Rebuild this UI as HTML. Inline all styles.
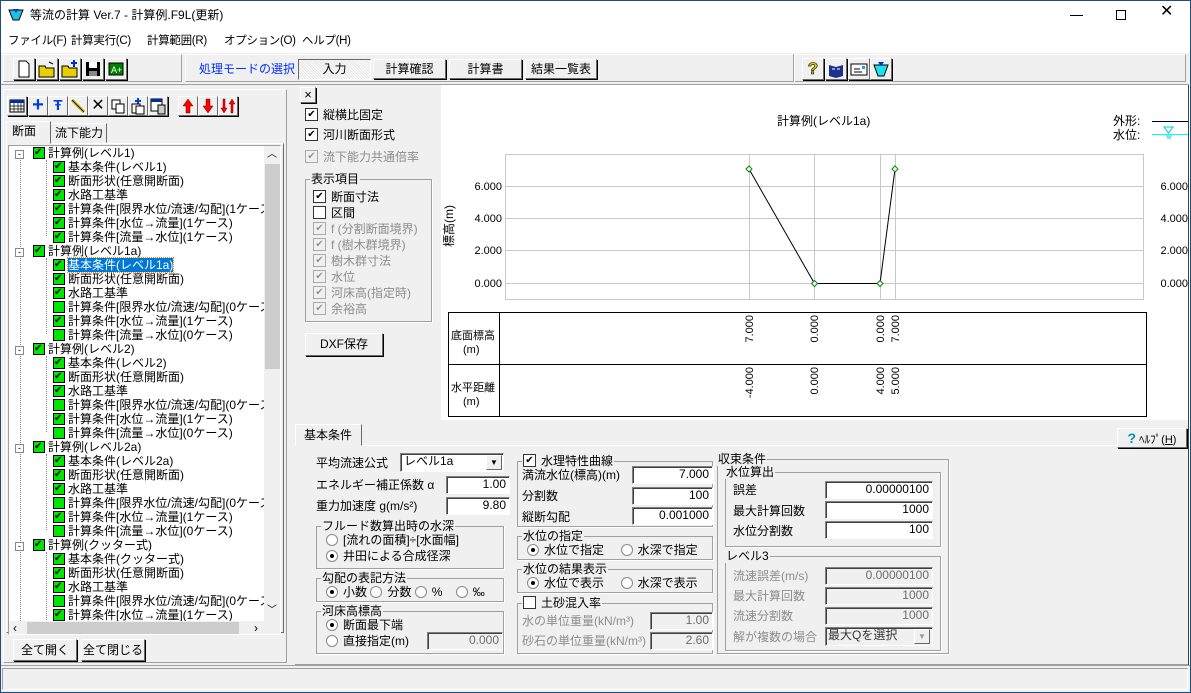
<!DOCTYPE html>
<html><head><meta charset="utf-8">
<style>
*{box-sizing:border-box;margin:0;padding:0}
body{width:1191px;height:693px;position:relative;overflow:hidden;background:#f0f0f0;font-family:"Liberation Sans","Noto Sans CJK JP",sans-serif;font-size:12px;color:#000}
.a{position:absolute;white-space:nowrap;line-height:14px}
.m{font-size:11.5px;letter-spacing:-0.3px}
.btn{position:absolute;background:#f0f0f0;border:1px solid;border-color:#fff #696969 #696969 #fff;box-shadow:1px 1px 0 #000;text-align:center}
.inp{position:absolute;background:#fff;border:1px solid;border-color:#808080 #fff #fff #808080;box-shadow:inset 1px 1px 0 #404040;text-align:right;padding-right:3px;line-height:15px;font-size:12px}
.inp.d{color:#6d6d6d;background:#f0f0f0}
.grp{position:absolute;border:1px solid #a0a0a0;box-shadow:1px 1px 0 #fff}
.grp>.lg{position:absolute;top:-8px;left:4px;background:#f0f0f0;padding:0 1px;line-height:14px}
.cb{display:inline-block;width:13px;height:13px;border:1px solid #333;background:#fff;vertical-align:-2px;margin-right:5px;position:relative;font-size:11px;line-height:11px;text-align:center}
.cb.k::after{content:"✔";position:absolute;left:0;top:0;width:11px;font-size:10px}
.cb.dis{border-color:#aaa;background:#f0f0f0;color:#999}
.rb{display:inline-block;width:12px;height:12px;border-radius:50%;border:1px solid #888;background:#fff;vertical-align:-2px;margin-right:5px;position:relative}
.rb.k::after{content:"";position:absolute;left:3px;top:3px;width:4px;height:4px;border-radius:50%;background:#000}
.dis{color:#8d8d8d}
.tr{position:absolute;height:14px;line-height:14px;white-space:nowrap}
.g{display:inline-block;width:12px;height:12px;background:#00e600;border:1px solid #000;vertical-align:-2px;margin-right:3px;position:relative}
.g.k::after{content:"✔";position:absolute;left:0;top:-1px;font-size:10px;line-height:12px}
.tbi{position:absolute;top:61px;width:22px;height:22px;border:1px solid;border-color:#fff #696969 #696969 #fff;box-shadow:1px 1px 0 #000}
.lti{position:absolute;top:96px;width:20px;height:20px;border:1px solid;border-color:#fff #696969 #696969 #fff;box-shadow:1px 1px 0 #000}
.pm{display:inline-block;width:9px;height:9px;border:1px solid #888;background:#fff;font-size:9px;line-height:6px;text-align:center;margin-right:9px;vertical-align:0}
</style></head><body>
<div style="position:absolute;left:0;top:0;width:1191px;height:52px;background:#fff"></div>
<svg style="position:absolute;left:8px;top:8px" width="16" height="14"><path d="M1 2h14l-4 10h-6z" fill="#20c0e0" stroke="#000" stroke-width="1"/><path d="M5 1h6l-3 4z" fill="#0040c0"/></svg>
<div class="a" style="left:30px;top:8px;font-size:12px">等流の計算 Ver.7 - 計算例.F9L(更新)</div>
<div style="position:absolute;left:1070px;top:15px;width:13px;height:1px;background:#000"></div>
<div style="position:absolute;left:1116px;top:10px;width:10px;height:10px;border:1px solid #000"></div>
<div class="a" style="left:1160px;top:5px;font-size:16px">✕</div>
<div class="a m" style="left:8px;top:34px">ファイル(F)</div>
<div class="a m" style="left:71px;top:34px">計算実行(C)</div>
<div class="a m" style="left:147px;top:34px">計算範囲(R)</div>
<div class="a m" style="left:224px;top:34px">オプション(O)</div>
<div class="a m" style="left:302px;top:34px">ヘルプ(H)</div>
<div style="position:absolute;left:0;top:52px;width:1189px;height:33px;border-top:1px solid #fff;border-bottom:1px solid #a0a0a0"></div>
<div style="position:absolute;left:3px;top:54px;width:179px;height:28px;border:1px solid;border-color:#fff #a0a0a0 #a0a0a0 #fff"></div>
<div style="position:absolute;left:185px;top:54px;width:1001px;height:28px;border:1px solid;border-color:#fff #a0a0a0 #a0a0a0 #fff"></div>
<div class="tbi" style="left:13px;top:58px"><svg width="20" height="20"><path d="M5 2h7l3 3v13H5z" fill="#fff" stroke="#000"/></svg></div>
<div class="tbi" style="left:36px;top:58px"><svg width="20" height="20"><path d="M2 7h6l1 2h8v9H2z" fill="#e8d000" stroke="#000"/><path d="M12 3l4 2" stroke="#000"/></svg></div>
<div class="tbi" style="left:59px;top:58px"><svg width="20" height="20"><path d="M2 7h6l1 2h8v9H2z" fill="#e8d000" stroke="#000"/><path d="M14 1v7M11 4h6" stroke="#0030c0" stroke-width="2"/></svg></div>
<div class="tbi" style="left:82px;top:58px"><svg width="20" height="20"><rect x="3" y="3" width="14" height="14" fill="#000"/><rect x="6" y="3" width="8" height="6" fill="#fff"/><rect x="6" y="12" width="8" height="5" fill="#888"/></svg></div>
<div class="tbi" style="left:105px;top:58px"><svg width="20" height="20"><rect x="3" y="4" width="14" height="12" fill="#008000" stroke="#000"/><text x="5" y="14" font-size="9" fill="#fff">A+</text></svg></div>
<div class="a" style="left:199px;top:62px;color:#0030ff">処理モードの選択</div>
<div style="position:absolute;left:298px;top:59px;width:73px;height:21px;border:1px solid;border-color:#696969 #fff #fff #696969;background:repeating-linear-gradient(45deg,#e8e8e8 0 1px,#fafafa 1px 2px);text-align:center;line-height:19px">入力</div>
<div class="btn" style="left:373px;top:59px;width:73px;height:20px;line-height:18px">計算確認</div>
<div class="btn" style="left:449px;top:59px;width:73px;height:20px;line-height:18px">計算書</div>
<div class="btn" style="left:525px;top:59px;width:72px;height:20px;line-height:18px">結果一覧表</div>
<div style="position:absolute;left:793px;top:54px;width:2px;height:28px;border-left:1px solid #a0a0a0;border-right:1px solid #fff"></div>
<div class="tbi" style="left:802px;top:58px;text-align:center;font-weight:bold;color:#e0d000;font-size:17px;line-height:19px;-webkit-text-stroke:0.6px #000">?</div>
<div class="tbi" style="left:825px;top:58px"><svg width="20" height="20"><path d="M3 6l7 2 7-2v11l-7 2-7-2z" fill="#203090"/><path d="M6 10h3M11 10h3" stroke="#fff"/></svg></div>
<div class="tbi" style="left:848px;top:58px"><svg width="20" height="20"><rect x="2" y="5" width="16" height="11" fill="#fff" stroke="#000"/><path d="M5 10h6M5 13h8" stroke="#000"/><rect x="13" y="7" width="3" height="3" fill="#20a0e0"/></svg></div>
<div class="tbi" style="left:870px;top:58px"><svg width="20" height="20"><path d="M3 6h14l-4 11H7z" fill="#20e0f0" stroke="#000"/><path d="M7 3h6l-3 4z" fill="#0030c0"/></svg></div>
<div style="position:absolute;left:3px;top:89px;width:284px;height:574px;border:1px solid;border-color:#fff #a0a0a0 #a0a0a0 #fff"></div>
<div class="lti" style="left:7px"><svg width="18" height="18"><rect x="2" y="3" width="14" height="12" fill="#fff" stroke="#000"/><rect x="2" y="3" width="14" height="3" fill="#0030a0"/><path d="M2 9h14M2 12h14M6 6v9M10 6v9M13 6v9" stroke="#000" stroke-width=".7"/></svg></div>
<div class="lti" style="left:28px;color:#0040e0;font-size:20px;font-weight:bold;text-align:center;line-height:17px">+</div>
<div class="lti" style="left:48px;color:#0040e0;font-size:15px;font-weight:bold;text-align:center;line-height:17px">Ŧ</div>
<div class="lti" style="left:68px"><svg width="18" height="18"><path d="M3 3l12 12" stroke="#c0a000" stroke-width="3"/><path d="M3 3l12 12" stroke="#000" stroke-width=".6"/></svg></div>
<div class="lti" style="left:88px;font-size:16px;text-align:center;line-height:17px">✕</div>
<div class="lti" style="left:108px"><svg width="18" height="18"><rect x="3" y="3" width="8" height="9" fill="#fff" stroke="#000"/><rect x="7" y="7" width="8" height="9" fill="#fff" stroke="#000"/></svg></div>
<div class="lti" style="left:128px"><svg width="18" height="18"><path d="M9 1v7M6 4h6" stroke="#0040e0" stroke-width="2"/><rect x="3" y="7" width="8" height="9" fill="#fff" stroke="#000"/><rect x="7" y="9" width="8" height="8" fill="#fff" stroke="#000"/></svg></div>
<div class="lti" style="left:148px"><svg width="18" height="18"><rect x="2" y="2" width="11" height="12" fill="#fff" stroke="#000"/><rect x="2" y="2" width="11" height="3" fill="#0030a0"/><rect x="9" y="8" width="7" height="9" fill="#ccc" stroke="#000"/></svg></div>
<div class="lti" style="left:178px"><svg width="18" height="18"><path d="M9 2l5 7h-3v7H7V9H4z" fill="#f00" stroke="#600" stroke-width=".5"/></svg></div>
<div class="lti" style="left:198px"><svg width="18" height="18"><path d="M9 16l5-7h-3V2H7v7H4z" fill="#f00" stroke="#600" stroke-width=".5"/></svg></div>
<div class="lti" style="left:218px"><svg width="18" height="18"><path d="M5 16l3-5H6V2H4v9H2zM13 2l3 5h-2v9h-2V7h-2z" fill="#f00" stroke="#600" stroke-width=".5"/></svg></div>
<div style="position:absolute;left:6px;top:121px;width:45px;height:23px;border:1px solid;border-color:#fff #696969 #f0f0f0 #fff;background:#f0f0f0;z-index:2"></div>
<div class="a" style="left:12px;top:124px;z-index:3">断面</div>
<div style="position:absolute;left:50px;top:123px;width:57px;height:20px;border:1px solid;border-color:#fff #696969 #f0f0f0 #fff"></div>
<div class="a" style="left:55px;top:126px">流下能力</div>
<div style="position:absolute;left:6px;top:143px;width:278px;height:490px;border:1px solid;border-color:#fff #696969 #696969 #fff"></div>
<div style="position:absolute;left:8px;top:145px;width:273px;height:490px;border:1px solid;border-color:#a0a0a0 #fff #fff #a0a0a0;background:#fff;overflow:hidden">
<div style="position:absolute;left:255px;top:0;width:17px;height:475px;background:#f0f0f0"></div>
<div style="position:absolute;left:256px;top:18px;width:15px;height:205px;background:#cdcdcd"></div>
<div class="a" style="left:258px;top:2px;font-size:10px">︿</div>
<div class="a" style="left:258px;top:458px;font-size:10px">﹀</div>
<div style="position:absolute;left:0;top:475px;width:272px;height:15px;background:#f0f0f0"></div>
<div style="position:absolute;left:18px;top:476px;width:212px;height:13px;background:#cdcdcd"></div>
<div class="a" style="left:4px;top:475px">‹</div>
<div class="a" style="left:245px;top:475px">›</div>
<div style="position:absolute;left:0;top:0;width:255px;height:475px;overflow:hidden">
<div style="position:absolute;left:11px;top:7px;height:470px;border-left:1px dotted #888"></div>
<div style="position:absolute;left:37px;top:14px;height:76px;border-left:1px dotted #888"></div>
<div style="position:absolute;left:37px;top:112px;height:76px;border-left:1px dotted #888"></div>
<div style="position:absolute;left:37px;top:210px;height:76px;border-left:1px dotted #888"></div>
<div style="position:absolute;left:37px;top:308px;height:76px;border-left:1px dotted #888"></div>
<div style="position:absolute;left:37px;top:406px;height:76px;border-left:1px dotted #888"></div>
<div class="tr" style="left:6px;top:0"><span class="pm">-</span><span class="g k"></span>計算例(レベル1)</div>
<div class="tr" style="left:44px;top:14px"><span class="g k"></span>基本条件(レベル1)</div>
<div class="tr" style="left:44px;top:28px"><span class="g k"></span>断面形状(任意開断面)</div>
<div class="tr" style="left:44px;top:42px"><span class="g k"></span>水路工基準</div>
<div class="tr" style="left:44px;top:56px"><span class="g k"></span>計算条件[限界水位/流速/勾配](1ケース)</div>
<div class="tr" style="left:44px;top:70px"><span class="g k"></span>計算条件[水位→流量](1ケース)</div>
<div class="tr" style="left:44px;top:84px"><span class="g k"></span>計算条件[流量→水位](1ケース)</div>
<div class="tr" style="left:6px;top:98px"><span class="pm">-</span><span class="g k"></span>計算例(レベル1a)</div>
<div class="tr" style="left:44px;top:112px"><span class="g k"></span><span style="background:#0078d7;color:#fff;outline:1px dotted #f80">基本条件(レベル1a)</span></div>
<div class="tr" style="left:44px;top:126px"><span class="g k"></span>断面形状(任意開断面)</div>
<div class="tr" style="left:44px;top:140px"><span class="g k"></span>水路工基準</div>
<div class="tr" style="left:44px;top:154px"><span class="g"></span>計算条件[限界水位/流速/勾配](0ケース)</div>
<div class="tr" style="left:44px;top:168px"><span class="g k"></span>計算条件[水位→流量](1ケース)</div>
<div class="tr" style="left:44px;top:182px"><span class="g"></span>計算条件[流量→水位](0ケース)</div>
<div class="tr" style="left:6px;top:196px"><span class="pm">-</span><span class="g k"></span>計算例(レベル2)</div>
<div class="tr" style="left:44px;top:210px"><span class="g k"></span>基本条件(レベル2)</div>
<div class="tr" style="left:44px;top:224px"><span class="g k"></span>断面形状(任意開断面)</div>
<div class="tr" style="left:44px;top:238px"><span class="g k"></span>水路工基準</div>
<div class="tr" style="left:44px;top:252px"><span class="g"></span>計算条件[限界水位/流速/勾配](0ケース)</div>
<div class="tr" style="left:44px;top:266px"><span class="g k"></span>計算条件[水位→流量](1ケース)</div>
<div class="tr" style="left:44px;top:280px"><span class="g"></span>計算条件[流量→水位](0ケース)</div>
<div class="tr" style="left:6px;top:294px"><span class="pm">-</span><span class="g k"></span>計算例(レベル2a)</div>
<div class="tr" style="left:44px;top:308px"><span class="g k"></span>基本条件(レベル2a)</div>
<div class="tr" style="left:44px;top:322px"><span class="g k"></span>断面形状(任意開断面)</div>
<div class="tr" style="left:44px;top:336px"><span class="g k"></span>水路工基準</div>
<div class="tr" style="left:44px;top:350px"><span class="g"></span>計算条件[限界水位/流速/勾配](0ケース)</div>
<div class="tr" style="left:44px;top:364px"><span class="g k"></span>計算条件[水位→流量](1ケース)</div>
<div class="tr" style="left:44px;top:378px"><span class="g"></span>計算条件[流量→水位](0ケース)</div>
<div class="tr" style="left:6px;top:392px"><span class="pm">-</span><span class="g k"></span>計算例(クッター式)</div>
<div class="tr" style="left:44px;top:406px"><span class="g k"></span>基本条件(クッター式)</div>
<div class="tr" style="left:44px;top:420px"><span class="g k"></span>断面形状(任意開断面)</div>
<div class="tr" style="left:44px;top:434px"><span class="g k"></span>水路工基準</div>
<div class="tr" style="left:44px;top:448px"><span class="g"></span>計算条件[限界水位/流速/勾配](0ケース)</div>
<div class="tr" style="left:44px;top:462px"><span class="g k"></span>計算条件[水位→流量](1ケース)</div>
</div></div>
<div class="btn" style="left:13px;top:639px;width:64px;height:22px;line-height:20px">全て開く</div>
<div class="btn" style="left:81px;top:639px;width:64px;height:22px;line-height:20px">全て閉じる</div>
<div class="btn" style="left:300px;top:87px;width:16px;height:16px;line-height:13px;font-size:13px">×</div>
<div class="a" style="left:305px;top:108px"><span class="cb k"></span>縦横比固定</div>
<div class="a" style="left:305px;top:128px"><span class="cb k"></span>河川断面形式</div>
<div class="a dis" style="left:305px;top:150px"><span class="cb k dis"></span>流下能力共通倍率</div>
<div class="grp" style="left:305px;top:179px;width:127px;height:143px"><span class="lg">表示項目</span></div>
<div class="a" style="left:313px;top:190px"><span class="cb k"></span>断面寸法</div>
<div class="a" style="left:313px;top:206px"><span class="cb"></span>区間</div>
<div class="a dis" style="left:313px;top:222px"><span class="cb k dis"></span>f (分割断面境界)</div>
<div class="a dis" style="left:313px;top:238px"><span class="cb k dis"></span>f (樹木群境界)</div>
<div class="a dis" style="left:313px;top:254px"><span class="cb k dis"></span>樹木群寸法</div>
<div class="a dis" style="left:313px;top:270px"><span class="cb k dis"></span>水位</div>
<div class="a dis" style="left:313px;top:286px"><span class="cb k dis"></span>河床高(指定時)</div>
<div class="a dis" style="left:313px;top:302px"><span class="cb k dis"></span>余裕高</div>
<div class="btn" style="left:305px;top:333px;width:78px;height:23px;line-height:21px">DXF保存</div>
<div style="position:absolute;left:441px;top:85px;width:747px;height:335px;background:#fff"></div>
<div class="a" style="left:777px;top:114px">計算例(レベル1a)</div>
<div class="a" style="left:1113px;top:114px">外形:</div>
<div class="a" style="left:1113px;top:128px">水位:</div>
<div style="position:absolute;left:1152px;top:121px;width:36px;height:1px;background:#000"></div>
<div style="position:absolute;left:1152px;top:134px;width:36px;height:1px;background:#0ff"></div>
<svg style="position:absolute;left:1163px;top:126px" width="12" height="14"><path d="M1 1h9l-4.5 6z" fill="none" stroke="#0cc"/><path d="M3 10h6M4 12h4" stroke="#0cc"/></svg>
<svg style="position:absolute;left:441px;top:85px" width="747" height="335">
<rect x="64.5" y="69.5" width="638" height="145" fill="none" stroke="#c8c8c8"/>
<path d="M64 101.5h638M64 133.5h638M64 165.5h638M64 198.5h638M308.5 70v145M373.5 70v145M439.5 70v145M454.5 70v145" stroke="#c8c8c8"/>
<path d="M308 84L373.5 198.5H439L454 84" fill="none" stroke="#000"/>
<g fill="#fff" stroke="#080"><path d="M308 81l3 3-3 3-3-3z"/><path d="M373.5 195.5l3 3-3 3-3-3z"/><path d="M439 195.5l3 3-3 3-3-3z"/><path d="M454 81l3 3-3 3-3-3z"/></g>
<g font-size="11" font-family="Liberation Sans" text-anchor="end"><text x="61" y="105">6.000</text><text x="61" y="137">4.000</text><text x="61" y="169">2.000</text><text x="61" y="202">0.000</text>
<text x="747" y="105">6.000</text><text x="747" y="137">4.000</text><text x="747" y="169">2.000</text><text x="747" y="202">0.000</text></g>
<text transform="translate(12,162) rotate(-90)" font-size="12" font-family="Liberation Sans,Noto Sans CJK JP">標高(m)</text>
<rect x="7.5" y="227.5" width="698" height="104" fill="none" stroke="#000"/>
<path d="M7 279.5h698M58.5 228v104" stroke="#000"/>
<g font-size="11" font-family="Liberation Sans,Noto Sans CJK JP">
<text x="10" y="254">底面標高</text><text x="22" y="268">(m)</text>
<text x="10" y="306">水平距離</text><text x="22" y="320">(m)</text>
</g>
<g font-size="11" font-family="Liberation Sans">
<text transform="translate(312,230) rotate(-90)" text-anchor="end">7.000</text>
<text transform="translate(377,230) rotate(-90)" text-anchor="end">0.000</text>
<text transform="translate(443,230) rotate(-90)" text-anchor="end">0.000</text>
<text transform="translate(458,230) rotate(-90)" text-anchor="end">7.000</text>
<text transform="translate(312,282) rotate(-90)" text-anchor="end">-4.000</text>
<text transform="translate(377,282) rotate(-90)" text-anchor="end">0.000</text>
<text transform="translate(443,282) rotate(-90)" text-anchor="end">4.000</text>
<text transform="translate(458,282) rotate(-90)" text-anchor="end">5.000</text>
</g>
</svg>
<div style="position:absolute;left:295px;top:424px;width:67px;height:22px;border:1px solid;border-color:#fff #696969 #f0f0f0 #fff;z-index:2;background:#f0f0f0"></div>
<div class="a" style="left:304px;top:428px;z-index:3">基本条件</div>
<div style="position:absolute;left:295px;top:445px;width:893px;height:220px;border-top:1px solid #fff;border-bottom:1px solid #a0a0a0"></div>
<div class="btn" style="left:1117px;top:428px;width:70px;height:20px;line-height:18px;font-size:11px"><b style="color:#0090b0;font-size:14px">?</b> ﾍﾙﾌﾟ(<u>H</u>)</div>
<div class="a" style="left:316px;top:456px">平均流速公式</div>
<div class="inp" style="left:400px;top:453px;width:104px;height:19px;text-align:left;padding-left:3px">レベル1a</div>
<div class="btn" style="left:486px;top:455px;width:16px;height:15px;box-shadow:none;font-size:8px;line-height:13px">▼</div>
<div class="a" style="left:316px;top:478px">エネルギー補正係数 α</div>
<div class="inp" style="left:446px;top:476px;width:64px;height:18px">1.00</div>
<div class="a" style="left:316px;top:499px">重力加速度 g(m/s²)</div>
<div class="inp" style="left:446px;top:497px;width:64px;height:18px">9.80</div>
<div class="grp" style="left:316px;top:526px;width:188px;height:43px"><span class="lg">フルード数算出時の水深</span></div>
<div class="a" style="left:326px;top:533px"><span class="rb"></span>[流れの面積]÷[水面幅]</div>
<div class="a" style="left:326px;top:549px"><span class="rb k"></span>井田による合成径深</div>
<div class="grp" style="left:316px;top:578px;width:188px;height:24px"><span class="lg">勾配の表記方法</span></div>
<div class="a" style="left:326px;top:585px"><span class="rb k"></span>小数 <span class="rb"></span>分数 <span class="rb"></span>%&nbsp;&nbsp;&nbsp; <span class="rb"></span>‰</div>
<div class="grp" style="left:316px;top:611px;width:188px;height:43px"><span class="lg">河床高標高</span></div>
<div class="a" style="left:326px;top:618px"><span class="rb k"></span>断面最下端</div>
<div class="a" style="left:326px;top:634px"><span class="rb"></span>直接指定(m)</div>
<div class="inp d" style="left:427px;top:632px;width:76px;height:18px">0.000</div>
<div class="grp" style="left:517px;top:461px;width:196px;height:66px"><span class="lg"><span class="cb k"></span>水理特性曲線</span></div>
<div class="a" style="left:522px;top:468px">満流水位(標高)(m)</div>
<div class="inp" style="left:632px;top:466px;width:81px;height:18px">7.000</div>
<div class="a" style="left:522px;top:489px">分割数</div>
<div class="inp" style="left:632px;top:487px;width:81px;height:18px">100</div>
<div class="a" style="left:522px;top:510px">縦断勾配</div>
<div class="inp" style="left:632px;top:507px;width:81px;height:18px">0.001000</div>
<div class="grp" style="left:517px;top:536px;width:196px;height:24px"><span class="lg">水位の指定</span></div>
<div class="a" style="left:527px;top:543px"><span class="rb k"></span>水位で指定&nbsp;&nbsp;&nbsp;&nbsp; <span class="rb"></span>水深で指定</div>
<div class="grp" style="left:517px;top:569px;width:196px;height:24px"><span class="lg">水位の結果表示</span></div>
<div class="a" style="left:527px;top:576px"><span class="rb k"></span>水位で表示&nbsp;&nbsp;&nbsp;&nbsp; <span class="rb"></span>水深で表示</div>
<div class="grp" style="left:517px;top:603px;width:196px;height:51px"><span class="lg"><span class="cb"></span>土砂混入率</span></div>
<div class="a dis" style="left:522px;top:614px">水の単位重量(kN/m³)</div>
<div class="inp d" style="left:650px;top:612px;width:63px;height:18px">1.00</div>
<div class="a dis" style="left:522px;top:634px">砂石の単位重量(kN/m³)</div>
<div class="inp d" style="left:650px;top:632px;width:63px;height:18px">2.60</div>
<div class="grp" style="left:717px;top:459px;width:232px;height:195px"><span class="lg" style="left:-1px">収束条件</span></div>
<div class="grp" style="left:725px;top:472px;width:216px;height:75px"><span class="lg" style="left:-1px">水位算出</span></div>
<div class="a" style="left:733px;top:483px">誤差</div>
<div class="inp" style="left:825px;top:481px;width:108px;height:18px">0.00000100</div>
<div class="a" style="left:733px;top:504px">最大計算回数</div>
<div class="inp" style="left:825px;top:501px;width:108px;height:18px">1000</div>
<div class="a" style="left:733px;top:524px">水位分割数</div>
<div class="inp" style="left:825px;top:521px;width:108px;height:18px">100</div>
<div class="grp" style="left:725px;top:556px;width:216px;height:95px"><span class="lg" style="left:-1px">レベル3</span></div>
<div class="a dis" style="left:733px;top:569px">流速誤差(m/s)</div>
<div class="inp d" style="left:825px;top:567px;width:108px;height:18px">0.00000100</div>
<div class="a dis" style="left:733px;top:589px">最大計算回数</div>
<div class="inp d" style="left:825px;top:587px;width:108px;height:18px">1000</div>
<div class="a dis" style="left:733px;top:609px">流速分割数</div>
<div class="inp d" style="left:825px;top:607px;width:108px;height:18px">1000</div>
<div class="a dis" style="left:733px;top:630px">解が複数の場合</div>
<div class="inp d" style="left:825px;top:627px;width:108px;height:19px;text-align:left;padding-left:2px;color:#333">最大Qを選択</div>
<div class="btn" style="left:914px;top:629px;width:16px;height:15px;box-shadow:none;font-size:8px;line-height:13px;color:#999">▼</div>
<div style="position:absolute;left:1188px;top:85px;width:3px;height:580px;background:#fff;border-left:1px solid #404040"></div>
<div style="position:absolute;left:0;top:665px;width:1191px;height:28px;border-top:1px solid #a0a0a0;background:#f0f0f0"></div>
<div style="position:absolute;left:2px;top:668px;width:1186px;height:22px;border:1px solid;border-color:#a0a0a0 #fff #fff #a0a0a0"></div>
<div style="position:absolute;left:0;top:0;width:1191px;height:693px;border:1px solid #1e4f7a;pointer-events:none"></div>
</body></html>
